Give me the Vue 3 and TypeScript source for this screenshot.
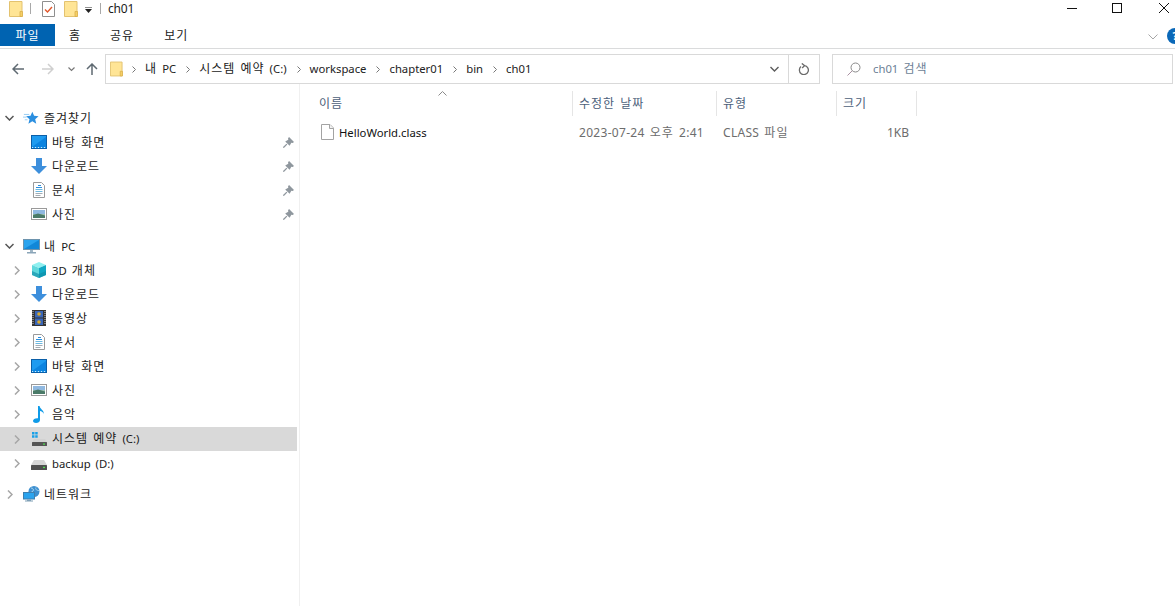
<script setup lang="ts">
import { h } from 'vue'

interface TreeRow {
  label: string
  icon: string
  level: 0 | 1
  chevron?: 'down' | 'right'
  pinned?: boolean
  selected?: boolean
  gap?: boolean
}

// Korean runs are set slightly wider than Latin, as the original UI font does.
const T = (props: { text: string }) =>
  props.text
    .split(/( ?[\uAC00-\uD7A3]+(?: [\uAC00-\uD7A3]+)* ?)/)
    .filter(Boolean)
    .map((part) => h('span', { class: /[\uAC00-\uD7A3]/.test(part) ? 'ko' : undefined }, part))
T.props = ['text']

const tree: TreeRow[] = [
  { label: '즐겨찾기', icon: 'star', level: 0, chevron: 'down' },
  { label: '바탕 화면', icon: 'desktop', level: 1, pinned: true },
  { label: '다운로드', icon: 'download', level: 1, pinned: true },
  { label: '문서', icon: 'doc', level: 1, pinned: true },
  { label: '사진', icon: 'picture', level: 1, pinned: true },
  { label: '내 PC', icon: 'pc', level: 0, chevron: 'down', gap: true },
  { label: '3D 개체', icon: 'cube', level: 1, chevron: 'right' },
  { label: '다운로드', icon: 'download', level: 1, chevron: 'right' },
  { label: '동영상', icon: 'film', level: 1, chevron: 'right' },
  { label: '문서', icon: 'doc', level: 1, chevron: 'right' },
  { label: '바탕 화면', icon: 'desktop', level: 1, chevron: 'right' },
  { label: '사진', icon: 'picture', level: 1, chevron: 'right' },
  { label: '음악', icon: 'music', level: 1, chevron: 'right' },
  { label: '시스템 예약 (C:)', icon: 'sysdrive', level: 1, chevron: 'right', selected: true },
  { label: 'backup (D:)', icon: 'drive', level: 1, chevron: 'right' },
  { label: '네트워크', icon: 'network', level: 0, chevron: 'right', gap: true },
]

const crumbs = ['내 PC', '시스템 예약 (C:)', 'workspace', 'chapter01', 'bin', 'ch01']
const tabs = ['홈', '공유', '보기']
const columns = [
  { label: '이름', width: 273 },
  { label: '수정한 날짜', width: 144 },
  { label: '유형', width: 120 },
  { label: '크기', width: 80 },
]
</script>

<template>
  <div class="window">
    <svg class="defs" width="0" height="0" aria-hidden="true">
      <symbol id="folder" viewBox="0 0 14 16">
        <path d="M.5.5h12.500v15H.5z" fill="#ffe596" stroke="#e3c26f" />
        <path d="M11 10.500h2.500v5H11z" fill="#f5cf66" stroke="#d9ae4a" stroke-width=".8" />
      </symbol>
      <symbol id="star" viewBox="0 0 18 18">
        <path d="M10.500 2l2 4.600 5 .5-3.800 3.300 1.200 5-4.400-2.700-4.400 2.700 1.200-5L3.500 7.100l5-.5z" fill="#2b8fe0" />
        <path d="M1 5h6M0 8h4M2 11h3" stroke="#8cc7f2" stroke-width="1" />
      </symbol>
      <symbol id="desktop" viewBox="0 0 16 14">
        <rect x=".5" y=".5" width="15" height="13" fill="#1e9bf0" stroke="#0b5fa8" />
        <path d="M1 12l14-10v10z" fill="#0c84e0" />
        <path d="M1 12.500h14" stroke="#cfe8fb" stroke-dasharray="1 2" />
      </symbol>
      <symbol id="download" viewBox="0 0 16 16">
        <path d="M5 0h6v8h5l-8 8-8-8h5z" fill="#3d8fdc" />
      </symbol>
      <symbol id="doc" viewBox="0 0 12 16">
        <path d="M.5.500h8l3 3v12H.5z" fill="#fff" stroke="#9a9a9a" />
        <path d="M5 3.500h3M3 5.500h6" stroke="#2b8fe0" />
        <path d="M2.500 7.500h7M2.500 9.500h7" stroke="#6cb8e0" />
        <path d="M2.500 11.500h7M2.500 13.500h5" stroke="#a3adb5" />
      </symbol>
      <symbol id="picture" viewBox="0 0 16 12">
        <rect x=".5" y=".5" width="15" height="11" fill="#fff" stroke="#9a9a9a" />
        <rect x="2" y="2" width="12" height="4" fill="#8fb8e0" />
        <rect x="2" y="6" width="12" height="4" fill="#9cc0b0" />
        <path d="M2 7l5-1.500 7 2v2.500H2z" fill="#4a7a68" />
      </symbol>
      <symbol id="pc" viewBox="0 0 17 15">
        <rect x=".5" y=".5" width="16" height="10" fill="#2aa3ee" stroke="#6d93ad" />
        <path d="M1 10l15-9v9z" fill="#1187d8" />
        <path d="M7 11h3v2H7z" fill="#9fb6c6" />
        <path d="M4 13h9v1.500H4z" fill="#8aa5b8" />
      </symbol>
      <symbol id="cube" viewBox="0 0 16 17">
        <path d="M8 0l7 3-7 3-7-3z" fill="#8ff0f0" />
        <path d="M1 3l7 3v10l-7-3z" fill="#5fd8dc" />
        <path d="M15 3L8 6v10l7-3z" fill="#10a8c4" />
        <path d="M1 9l7 3 7-3v4l-7 3-7-3z" fill="#0f8ea8" opacity=".65" />
      </symbol>
      <symbol id="film" viewBox="0 0 14 16">
        <rect width="14" height="16" fill="#333" />
        <path d="M1 1v14M13 1v14" stroke="#cfcfcf" stroke-dasharray="1 1" />
        <rect x="3" y="1" width="8" height="6.500" fill="#3a66b8" />
        <rect x="3" y="8.500" width="8" height="6.500" fill="#3a66b8" />
        <circle cx="7" cy="4" r="1.800" fill="#d7a92e" />
        <circle cx="7" cy="12" r="1.800" fill="#d7a92e" />
      </symbol>
      <symbol id="music" viewBox="0 0 12 17">
        <path d="M5 0h1.600c.3 3 4.400 4 4.400 8-.8-1.800-2.500-2.800-4-3v9c0 2-2 3-4 3-1.500 0-3-.7-3-2 0-1.800 2.200-3 5-2.700z" fill="#0f9be8" />
      </symbol>
      <symbol id="sysdrive" viewBox="0 0 16 16">
        <path d="M1 1h2.500v2.500H1zM4.200 1h2.500v2.500H4.200zM1 4.200h2.500v2.500H1zM4.200 4.200h2.500v2.500H4.200z" fill="#18a0e8" />
        <path d="M3 8h11l2 3.500H1z" fill="#d2d2d2" />
        <rect x="1" y="11" width="15" height="4" rx=".5" fill="#555" />
        <rect x="12" y="12.500" width="2" height="1.200" fill="#4fe04f" />
      </symbol>
      <symbol id="drive" viewBox="0 0 16 10">
        <path d="M3 0h10l3 5H0z" fill="#d6d6d6" />
        <rect y="5" width="16" height="5" rx=".5" fill="#4f4f4f" />
        <rect x="12" y="6.800" width="2" height="1.300" fill="#4fe04f" />
      </symbol>
      <symbol id="network" viewBox="0 0 17 16">
        <circle cx="11" cy="5.500" r="5.500" fill="#3c8fd0" />
        <path d="M8 2c2 0 3 1.500 2 3s-3 1-3 3M13 1.500c-1 2 1 3 3 3" stroke="#a9d4ef" fill="none" />
        <rect x=".5" y="6.500" width="11" height="6.500" fill="#2aa3ee" stroke="#3e7fae" />
        <path d="M4 13.500h4v1H4zM2 14.500h8v1H2z" fill="#7f9fb6" />
      </symbol>
      <symbol id="pin" viewBox="0 0 10 10">
        <path d="M5.500 0L10 4.500 8.800 5.400 7.600 5.200 6 8 2 4 4.800 2.400 4.600 1.200z" fill="#8f979e" />
        <path d="M3.500 6.500L.3 9.700" stroke="#8f979e" stroke-width="1.200" />
      </symbol>
    </svg>

    <header class="titlebar">
      <svg class="qa folder"><use href="#folder" /></svg>
      <i class="qa-sep first"></i>
      <svg class="qa check" viewBox="0 0 13 16">
        <path d="M.5.500h9l3 3v12H.5z" fill="#fff" stroke="#8f8f8f" />
        <path d="M3 8.500l2.500 2.500 4.500-5" fill="none" stroke="#e0562a" stroke-width="1.400" />
      </svg>
      <svg class="qa folder second"><use href="#folder" /></svg>
      <svg class="qa-more" viewBox="0 0 7 6">
        <path d="M0 0h7" stroke="#222" />
        <path d="M0 2h7L3.500 6z" fill="#222" />
      </svg>
      <i class="qa-sep last"></i>
      <span class="title">ch01</span>
      <div class="win-controls">
        <svg class="ctl minimize" viewBox="0 0 10 10"><path d="M0 5.500h10" stroke="#111" /></svg>
        <svg class="ctl maximize" viewBox="0 0 10 10"><rect x=".5" y=".5" width="9" height="9" fill="none" stroke="#111" /></svg>
        <svg class="ctl close" viewBox="0 0 10 10"><path d="M0 0l10 10M10 0L0 10" stroke="#111" /></svg>
      </div>
    </header>

    <nav class="ribbon">
      <span class="tab file ko">파일</span>
      <span v-for="tab in tabs" :key="tab" class="tab ko">{{ tab }}</span>
      <svg class="ribbon-chevron" viewBox="0 0 10 6"><path d="M.5.500L5 5 9.500.5" fill="none" stroke="#a6a6a6" /></svg>
      <span class="help">?</span>
    </nav>

    <section class="addressbar">
      <div class="nav-buttons">
        <svg class="nav back" viewBox="0 0 12 12"><path d="M6 1L1 6l5 5M1 6h11" fill="none" stroke="#5f6a72" stroke-width="1.500" /></svg>
        <svg class="nav forward" viewBox="0 0 12 12"><path d="M6 1l5 5-5 5M11 6H0" fill="none" stroke="#cfcfcf" stroke-width="1.500" /></svg>
        <svg class="nav recent" viewBox="0 0 7 5"><path d="M.5.500L3.500 3.500 6.500.5" fill="none" stroke="#777" stroke-width="1.200" /></svg>
        <svg class="nav up" viewBox="0 0 12 12"><path d="M1 6l5-5 5 5M6 1v11" fill="none" stroke="#5f6a72" stroke-width="1.500" /></svg>
      </div>
      <div class="address">
        <svg class="addr-folder"><use href="#folder" /></svg>
        <template v-for="crumb in crumbs" :key="crumb">
          <svg class="crumb-sep" viewBox="0 0 4 7"><path d="M.5.500l3 3-3 3" fill="none" stroke="#777" /></svg>
          <span class="crumb"><T :text="crumb" /></span>
        </template>
        <svg class="addr-down" viewBox="0 0 9 6"><path d="M.5 1L4.500 5l4-4" fill="none" stroke="#5c5c5c" stroke-width="1.400" /></svg>
        <span class="refresh">
          <svg viewBox="0 0 12 12"><path d="M3 3.600A4.500 4.500 0 1 0 6.500 2.600M3.800 .4L6.500 2.600 4.200 5" fill="none" stroke="#6a6a6a" stroke-width="1.300" /></svg>
        </span>
      </div>
      <div class="search">
        <svg class="search-icon" viewBox="0 0 14 14"><circle cx="8.500" cy="5.500" r="4.500" fill="none" stroke="#8a8a8a" /><path d="M5.200 8.800L.5 13.500" stroke="#a88fa0" /></svg>
        <span><T text="ch01 검색" /></span>
      </div>
    </section>

    <main class="content">
      <aside class="sidebar">
        <div
          v-for="(row, i) in tree"
          :key="i"
          class="tree-row"
          :class="[`level-${row.level}`, { selected: row.selected, gap: row.gap }]"
        >
          <span class="chev-slot">
            <svg v-if="row.chevron === 'down'" class="chev down" viewBox="0 0 9 6"><path d="M.5 1L4.500 5l4-4" fill="none" stroke="#555" stroke-width="1.500" /></svg>
            <svg v-else-if="row.chevron === 'right'" class="chev right" viewBox="0 0 6 9"><path d="M1 .5L5 4.500 1 8.500" fill="none" stroke="#a6a6a6" stroke-width="1.500" /></svg>
          </span>
          <span class="icon-slot">
            <svg class="tree-icon" :class="`i-${row.icon}`"><use :href="`#${row.icon}`" /></svg>
          </span>
          <span class="label"><T :text="row.label" /></span>
          <svg v-if="row.pinned" class="pin"><use href="#pin" /></svg>
        </div>
      </aside>

      <section class="files">
        <svg class="sort-caret" viewBox="0 0 9 5"><path d="M.5 4.500L4.500.5l4 4" fill="none" stroke="#8a8a8a" /></svg>
        <div class="columns">
          <div v-for="col in columns" :key="col.label" class="col-head" :style="{ width: col.width + 'px' }"><T :text="col.label" /></div>
        </div>
        <div class="file-row">
          <div class="cell name" :style="{ width: columns[0].width + 'px' }">
            <svg class="file-icon" viewBox="0 0 13 16">
              <path d="M.5.500h8.500l3.500 3.500v11.500H.5z" fill="#fff" stroke="#a3a3a3" />
              <path d="M8.500.5v4h4" fill="#f2f2f2" stroke="#a3a3a3" />
            </svg>
            <span>HelloWorld.class</span>
          </div>
          <div class="cell meta" :style="{ width: columns[1].width + 'px' }"><T text="2023-07-24 오후 2:41" /></div>
          <div class="cell meta" :style="{ width: columns[2].width + 'px' }"><T text="CLASS 파일" /></div>
          <div class="cell meta size" :style="{ width: columns[3].width + 'px' }">1KB</div>
        </div>
      </section>
    </main>
  </div>
</template>

<style>
html, body { margin: 0; background: #fff; overflow: hidden; }
.ko { font-size: 12px; letter-spacing: 1px; word-spacing: 1px; }
</style>

<style scoped>
.window {
  width: 1175px;
  height: 606px;
  overflow: hidden;
  background: #fff;
  color: #1a1a1a;
  font: 11.3px/16px "Noto Sans", "Noto Sans CJK KR", sans-serif;
  display: flex;
  flex-direction: column;
}
.defs { position: absolute; }
.titlebar {
  height: 24px;
  display: flex;
  align-items: flex-start;
  flex: none;
}
.qa { width: 14px; height: 16px; margin-top: 1px; flex: none; }
.qa.folder { margin-left: 9px; }
.qa.check { margin-left: 7px; width: 13px; }
.qa.folder.second { margin-left: 9px; }
.qa-sep { width: 1px; height: 11px; margin-top: 3px; background: #a8a8a8; flex: none; }
.qa-sep.first { margin-left: 7px; margin-right: 4px; }
.qa-more { width: 7px; height: 6px; margin: 7px 0 0 7px; flex: none; }
.qa-sep.last { margin-left: 8px; }
.title { margin: 1px 0 0 7px; font-size: 12px; line-height: 16px; letter-spacing: -.2px; }
.win-controls { margin-left: auto; position: relative; width: 110px; height: 24px; display: flex; }
.ctl { width: 10px; height: 10px; margin-top: 3px; flex: none; }
.minimize { margin-left: 2px; }
.maximize { margin-left: 35px; }
.close { margin-left: 37px; }
.ribbon {
  height: 24px;
  flex: none;
  display: flex;
  align-items: flex-start;
  border-bottom: 1px solid #dadbdc;
  position: relative;
}
.tab {
  height: 23px;
  line-height: 24px;
  padding: 0 14px;
  color: #222;
}
.tab:nth-child(3) { margin-left: 1px; }
.tab:nth-child(4) { margin-left: 2px; }
.tab.file {
  width: 55px;
  height: 22px;
  box-sizing: border-box;
  padding: 0;
  text-align: center;
  color: #fff;
  background: #0063b1;
}
.ribbon-chevron { width: 10px; height: 6px; margin: 10px 0 0 auto; margin-right: 17px; }
.help {
  position: absolute;
  right: -8px;
  top: 4px;
  width: 16px;
  height: 16px;
  border-radius: 50%;
  background: #0a68b8;
  color: #fff;
  font-size: 11px;
  font-weight: 700;
  line-height: 16px;
  text-align: center;
}
.addressbar {
  flex: none;
  height: 30px;
  margin-top: 5px;
  display: flex;
  align-items: stretch;
}
.nav-buttons { width: 105px; position: relative; display: flex; align-items: center; flex: none; }
.nav { flex: none; width: 12px; height: 12px; margin-left: 12px; }
.forward { margin-left: 18px; }
.recent { width: 7px; height: 5px; margin-left: 14px; }
.up { margin-left: 11px; }
.address {
  width: 715px;
  box-sizing: border-box;
  border: 1px solid #d9d9d9;
  display: flex;
  align-items: center;
  flex: none;
}
.addr-folder { width: 13px; height: 16px; margin: 0 -1px 0 4px; flex: none; }
.crumb-sep { width: 4px; height: 7px; margin: 0 9px 0 10px; flex: none; }
.crumb { color: #222; white-space: nowrap; }
.addr-down { width: 9px; height: 6px; margin-left: auto; flex: none; }
.refresh {
  width: 30px;
  height: 100%;
  margin-left: 9px;
  border-left: 1px solid #d9d9d9;
  display: flex;
  align-items: center;
  justify-content: center;
  flex: none;
}
.refresh svg { width: 12px; height: 12px; }
.search {
  width: 341px;
  margin-left: 12px;
  box-sizing: border-box;
  border: 1px solid #d9d9d9;
  display: flex;
  align-items: center;
  color: #6d7f96;
  flex: none;
}
.search-icon { width: 14px; height: 14px; margin: 0 12px 0 14px; flex: none; }
.content { flex: 1; display: flex; min-height: 0; }
.sidebar {
  width: 300px;
  box-sizing: border-box;
  border-right: 1px solid #f0f0f0;
  padding-top: 22px;
  flex: none;
}
.tree-row {
  height: 24px;
  display: flex;
  align-items: center;
  width: 297px;
  position: relative;
}
.tree-row.gap { margin-top: 8px; }
.tree-row.selected { background: #d9d9d9; margin-top: 1px; }
.chev-slot { flex: none; display: flex; align-items: center; }
.level-0 .chev-slot { width: 22px; padding-left: 5px; box-sizing: border-box; }
.level-1 .chev-slot { width: 30px; padding-left: 14px; box-sizing: border-box; }
.tree-row:last-child { margin-top: 7px; }
.tree-row:last-child .chev-slot { padding-left: 7px; }
.chev.down { width: 9px; height: 6px; }
.chev.right { width: 6px; height: 9px; }
.icon-slot { width: 18px; height: 18px; display: flex; align-items: center; justify-content: center; flex: none; }
.tree-icon { width: 16px; height: 16px; }
.i-doc { width: 12px; }
.i-picture { height: 12px; }
.i-desktop { height: 14px; }
.i-pc { width: 17px; height: 15px; }
.i-cube { height: 17px; }
.i-drive { height: 10px; margin-top: 4px; }
.i-film { width: 14px; }
.i-music { width: 12px; height: 17px; }
.i-network { width: 17px; height: 16px; }
.label { margin-left: 4px; padding-top: 2px; white-space: nowrap; word-spacing: 2px; }
.selected .label { padding-top: 0; }
.pin { width: 11px; height: 11px; position: absolute; left: 283px; top: 7px; }
.files { flex: 1; position: relative; padding-top: 7px; }
.sort-caret { width: 9px; height: 5px; position: absolute; left: 138px; top: 7px; }
.columns { display: flex; height: 25px; }
.col-head {
  box-sizing: border-box;
  border-right: 1px solid #e5e5e5;
  padding-left: 6px;
  line-height: 25px;
  color: #4c607a;
  flex: none;
}
.col-head:first-child { padding-left: 19px; }
.file-row { display: flex; height: 24px; margin-top: 4px; align-items: center; }
.cell { flex: none; box-sizing: border-box; padding: 2px 0 0 6px; white-space: nowrap; }
.cell.name { display: flex; align-items: center; padding: 0 0 0 21px; color: #111; }
.cell.name span { padding-top: 2px; }
.file-icon { width: 13px; height: 16px; margin-right: 5px; flex: none; }
.cell.meta { color: #6d6d6d; font-size: 12px; letter-spacing: .3px; }
.cell.size { text-align: right; padding-right: 8px; letter-spacing: 0; }
</style>
